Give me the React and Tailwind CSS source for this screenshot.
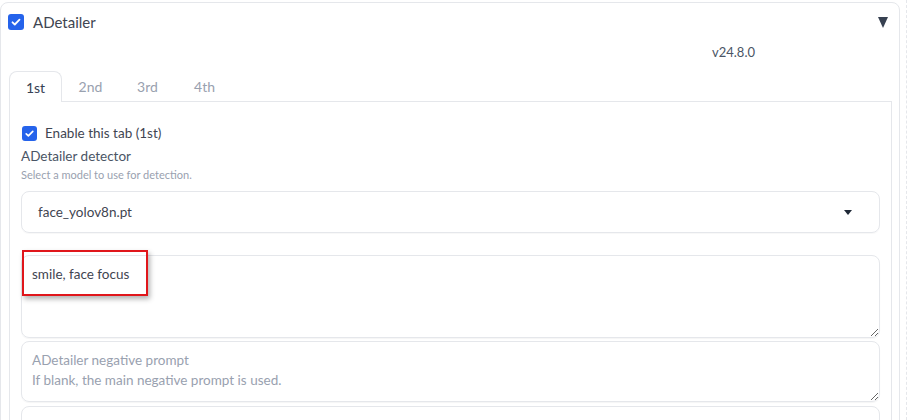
import React from 'react';

const font = { fontFamily: '"Source Sans Pro", Lato, "Noto Sans", sans-serif' };

const Check = ({ size = 'w-4 h-4' }) => (
  <span className={`${size} shrink-0 rounded-[3px] bg-[#2563eb] flex items-center justify-center`}>
    <svg viewBox="0 0 16 16" className="w-full h-full">
      <path d="M4.5 8.3l2.3 2.2 4.7-4.8" fill="none" stroke="white" strokeWidth="1.8" strokeLinecap="round" strokeLinejoin="round" />
    </svg>
  </span>
);

const tabs = ['1st', '2nd', '3rd', '4th'];

export default function App() {
  return (
    <div className="w-[909px] h-[420px] overflow-hidden bg-white flex text-[#3f4551]" style={font}>
      {/* accordion card */}
      <div className="mt-[2px] w-[900px] h-[460px] shrink-0 border border-gray-200 rounded-lg bg-white">
        <div className="flex items-center pl-[7px] pr-[11px] pt-[9px]">
          <Check size="w-4 h-4" />
          <span className="ml-[9px] text-[15px] leading-5">ADetailer</span>
          <svg viewBox="0 0 10 11" className="ml-auto w-[10px] h-[11px]">
            <polygon points="0,0 10,0 5,11" fill="#374151" />
          </svg>
        </div>

        <div className="pl-[711px] mt-[10px] text-[13px] leading-5 text-gray-600">v24.8.0</div>

        {/* tabs */}
        <div className="ml-[8px] mt-[9px] flex items-end">
          <div className="relative z-10 -mb-px w-[53px] h-[31px] border border-b-0 border-gray-200 rounded-t-lg bg-white flex items-center justify-center text-[14px] text-gray-700">
            1st
          </div>
          {tabs.slice(1).map((t) => (
            <div key={t} className="h-[30px] w-[57px] flex items-center justify-center text-[14px] text-gray-400">
              {t}
            </div>
          ))}
        </div>

        {/* tab panel */}
        <div className="ml-[8px] w-[883px] border border-b-0 border-gray-200 pl-[11px] pr-[11px] pt-[23px]">
          <div className="flex items-center pl-[1px]">
            <Check size="w-[15px] h-[15px]" />
            <span className="ml-[8px] text-[13.5px] leading-4">Enable this tab (1st)</span>
          </div>
          <div className="mt-[5px] text-[13.5px] leading-5 text-gray-600">ADetailer detector</div>
          <div className="text-[11px] leading-4 text-gray-400 mt-[1px]">Select a model to use for detection.</div>

          <div className="mt-[8px] h-[42px] border border-gray-200 rounded-lg flex items-center pl-[16px] pr-[27px] text-[13.5px] shadow-[0_1px_1px_rgba(0,0,0,0.03)]">
            face_yolov8n.pt
            <svg viewBox="0 0 8 5" className="ml-auto w-[8px] h-[5px]">
              <polygon points="0,0 8,0 4,5" fill="#1f2937" />
            </svg>
          </div>

          <div className="relative mt-[22px]">
            <textarea
              readOnly
              defaultValue="smile, face focus"
              className="block w-full h-[83px] border border-gray-200 rounded-lg px-[10px] pt-[8px] text-[13.5px] leading-5 text-[#3f4551] outline-none resize-y shadow-[0_1px_1px_rgba(0,0,0,0.04)]"
            />
            <div className="absolute left-[1px] top-[-5px] w-[126px] h-[46px] border-2 border-[#e0161b] shadow-[2px_3px_5px_rgba(0,0,0,0.3)] pointer-events-none" />
          </div>

          <textarea
            readOnly
            placeholder={'ADetailer negative prompt\nIf blank, the main negative prompt is used.'}
            className="mt-[3px] block w-full h-[61px] border border-gray-200 rounded-lg px-[10px] pt-[8px] text-[13.5px] leading-5 placeholder:text-gray-400 outline-none resize-y shadow-[0_1px_1px_rgba(0,0,0,0.04)]"
          />

          <div className="mt-[4px] h-[60px] border border-gray-200 rounded-lg" />
        </div>
      </div>

      <div className="ml-[6px] h-full border-l border-dashed border-gray-200" />
    </div>
  );
}
